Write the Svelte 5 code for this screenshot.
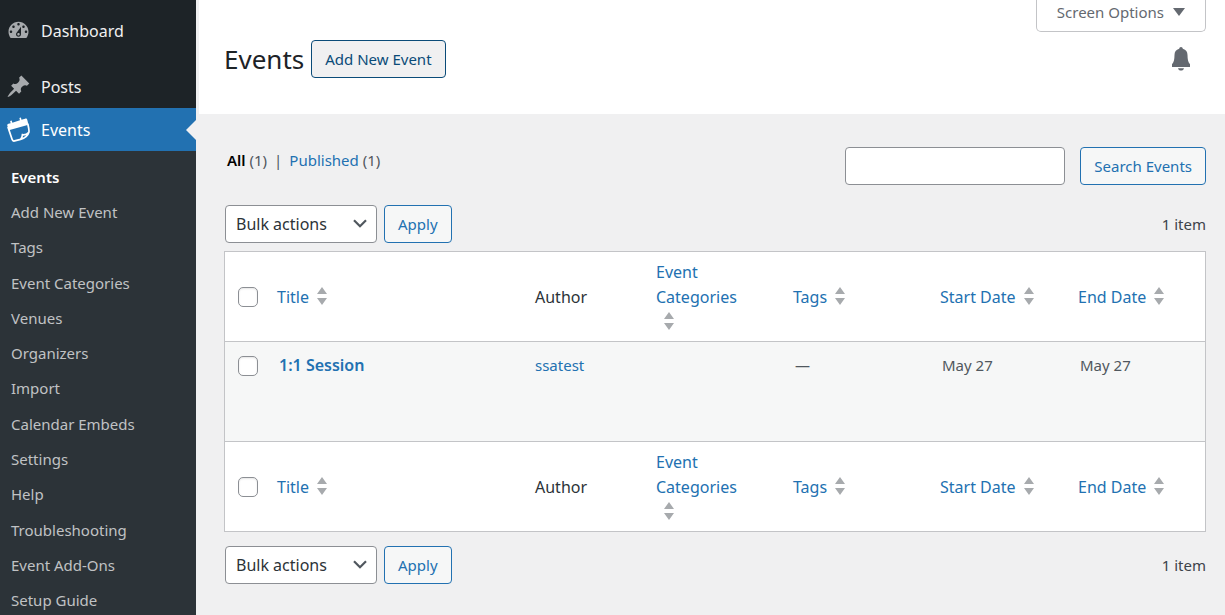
<script lang="ts">
  const submenu = [
    "Events",
    "Add New Event",
    "Tags",
    "Event Categories",
    "Venues",
    "Organizers",
    "Import",
    "Calendar Embeds",
    "Settings",
    "Help",
    "Troubleshooting",
    "Event Add-Ons",
    "Setup Guide",
  ];

  const columns = [
    { key: "title", label: "Title", sortable: true },
    { key: "author", label: "Author", sortable: false },
    { key: "categories", label: "Event Categories", sortable: true },
    { key: "tags", label: "Tags", sortable: true },
    { key: "start", label: "Start Date", sortable: true },
    { key: "end", label: "End Date", sortable: true },
  ];

  const events = [
    { id: 1, title: "1:1 Session", author: "ssatest", categories: "", tags: "—", start: "May 27", end: "May 27" },
  ];

  let search = $state("");
  let selected = $state<number[]>([]);
  let allSelected = $derived(selected.length === events.length);

  function toggleAll() {
    selected = allSelected ? [] : events.map((e) => e.id);
  }
</script>

{#snippet bulkNav(position: string)}
  <div class="tablenav {position}">
    <div class="bulk">
      <span class="select-wrap">
        <select aria-label="Select bulk action">
          <option>Bulk actions</option>
          <option>Edit</option>
          <option>Move to Trash</option>
        </select>
        <svg class="chevron" viewBox="0 0 14 9" aria-hidden="true">
          <path d="M1 1.2l6 6 6-6" fill="none" stroke="#50575e" stroke-width="2.2" />
        </svg>
      </span>
      <button class="button">Apply</button>
    </div>
    <span class="count">1 item</span>
  </div>
{/snippet}

{#snippet headings()}
  <tr>
    <td class="check">
      <input type="checkbox" aria-label="Select all" checked={allSelected} onchange={toggleAll} />
    </td>
    {#each columns as col (col.key)}
      <th scope="col">
        {#if col.sortable}
          <a href="#{col.key}">
            {col.label}<svg class="sorter" viewBox="0 0 10 18" aria-hidden="true">
              <path d="M0 7L5 0l5 7zM0 11h10l-5 7z" />
            </svg>
          </a>
        {:else}
          {col.label}
        {/if}
      </th>
    {/each}
  </tr>
{/snippet}

<div class="admin">
  <nav class="sidebar" aria-label="Main menu">
    <a class="item dashboard" href="#dashboard">
      <svg viewBox="0 0 20 20" aria-hidden="true">
        <path
          fill-rule="evenodd"
          d="M3.76 16h12.48c1.1-1.37 1.76-3.11 1.76-5 0-4.42-3.58-8-8-8s-8 3.58-8 8c0 1.89.66 3.63 1.76 5zM10 4c.55 0 1 .45 1 1s-.45 1-1 1-1-.45-1-1 .45-1 1-1zM6 6c.55 0 1 .45 1 1s-.45 1-1 1-1-.45-1-1 .45-1 1-1zm8 0c.55 0 1 .45 1 1s-.45 1-1 1-1-.45-1-1 .45-1 1-1zM12 7v6c0 1.1-.9 2-2 2s-2-.9-2-2c0-.57.24-1.08.63-1.45zM4 10c.55 0 1 .45 1 1s-.45 1-1 1-1-.45-1-1 .45-1 1-1zm12 0c.55 0 1 .45 1 1s-.45 1-1 1-1-.45-1-1 .45-1 1-1zm-5 3c0-.55-.45-1-1-1s-1 .45-1 1 .45 1 1 1 1-.45 1-1z"
        />
      </svg>
      Dashboard
    </a>
    <a class="item" href="#posts">
      <svg viewBox="0 0 20 20" aria-hidden="true">
        <path
          d="M10.44 3.02l1.82-1.82 6.36 6.35-1.83 1.82c-1.05-.68-2.48-.57-3.41.36l-.75.75c-.92.93-1.04 2.35-.35 3.41l-1.83 1.82-2.41-2.41-2.8 2.79c-.42.42-3.38 2.71-3.8 2.29s1.86-3.39 2.28-3.81l2.79-2.79L4.1 9.36l1.83-1.82c1.05.69 2.48.57 3.4-.36l.75-.75c.93-.92 1.05-2.35.36-3.41z"
        />
      </svg>
      Posts
    </a>
    <a class="item current" href="#events">
      <svg viewBox="0 -1 26 26" aria-hidden="true">
        <path
          d="M1.4 8.2c-.3-1.2.2-1.800 1.200-2.100l2.200-.7L4.300 3.200l1.600-.5.7 2.200 7.900-2.500L13.900.1l1.600-.5.6 2.200 3.700-1.100c1.200-.4 2 0 2.300 1.200l1.300 5.200L2.900 12.900z"
        />
        <path
          d="M2 9.500l4.300 12.700c.5 1.600 1.200 2.100 2.600 1.700l6.200-1.700c4-.9 7.400-3 8.700-7.300.5-2.400-.3-5-1.200-8.900M15.100 22.200c1.700-1.400 1.700-2.600 2-4.800 2.300.4 4.600-.4 6.700-2.500"
          fill="none"
          stroke="currentColor"
          stroke-width="1.8"
        />
      </svg>
      Events
    </a>
    <ul class="submenu">
      {#each submenu as label, i (label)}
        <li><a href="#sub-{i}" class:active={i === 0}>{label}</a></li>
      {/each}
    </ul>
  </nav>

  <div class="main">
    <header>
      <button class="screen-options">Screen Options <span class="caret"></span></button>
      <div class="heading">
        <h1>Events</h1>
        <a class="button add" href="#new">Add New Event</a>
        <button class="bell" aria-label="Notifications">
          <svg viewBox="0 0 18 24" aria-hidden="true">
            <path d="M9 0c1.100 0 1.600.8 1.800 1.800 3.300.8 4.600 3.200 4.700 6.200.1 4.500.5 7 2.500 9.200V20H0v-2.800C2 15 2.400 12.500 2.500 8c.1-3 1.400-5.400 4.700-6.200C7.400.8 7.900 0 9 0zM6 21.200h6c-.3 1.500-1.500 2.400-3 2.400s-2.700-.9-3-2.400z" />
          </svg>
        </button>
      </div>
    </header>

    <main>
      <div class="filters">
        <ul class="views">
          <li><a class="all" href="#all">All</a> (1)</li>
          <li>|</li>
          <li><a href="#published">Published</a> (1)</li>
        </ul>
        <form class="search" onsubmit={(e) => e.preventDefault()}>
          <input type="search" aria-label="Search Events" bind:value={search} />
          <button class="button">Search Events</button>
        </form>
      </div>

      {@render bulkNav("top")}

      <table>
        <colgroup>
          <col class="col-check" />
          {#each columns as col (col.key)}
            <col class="col-{col.key}" />
          {/each}
        </colgroup>
        <thead>{@render headings()}</thead>
        <tbody>
          {#each events as event (event.id)}
            <tr>
              <td class="check">
                <input type="checkbox" aria-label="Select {event.title}" value={event.id} bind:group={selected} />
              </td>
              <td class="title"><a href="#event-{event.id}">{event.title}</a></td>
              <td class="author"><a href="#author">{event.author}</a></td>
              <td>{event.categories}</td>
              <td>{event.tags}</td>
              <td>{event.start}</td>
              <td>{event.end}</td>
            </tr>
          {/each}
        </tbody>
        <tfoot>{@render headings()}</tfoot>
      </table>

      {@render bulkNav("bottom")}
    </main>
  </div>
</div>

<style>
  :global(body) {
    background: #f0f0f1;
  }
  .admin {
    display: flex;
    min-height: 100vh;
    background: #f0f0f1;
    color: #50575e;
    font-family: "Noto Sans", "Open Sans", sans-serif;
    font-size: 15px;
    line-height: 24px;
  }
  .admin * {
    box-sizing: border-box;
  }
  a {
    color: #2271b1;
    text-decoration: none;
  }
  ul {
    list-style: none;
    margin: 0;
    padding: 0;
  }
  button,
  input,
  select {
    font: inherit;
    margin: 0;
  }

  .sidebar {
    flex: 0 0 196px;
    background: #1d2327;
    padding-top: 9px;
  }
  .item {
    position: relative;
    display: flex;
    align-items: center;
    gap: 10px;
    height: 43px;
    padding-left: 6px;
    color: #f0f0f1;
    font-size: 16px;
  }
  .item svg {
    width: 25px;
    height: 25px;
    fill: #a7aaad;
  }
  .dashboard {
    margin-bottom: 13px;
  }
  .current {
    background: #2271b1;
    color: #fff;
  }
  .current svg {
    fill: #fff;
  }
  .current::after {
    content: "";
    position: absolute;
    right: 0;
    top: 12px;
    border: 10px solid transparent;
    border-left: 0;
    border-right-color: #f0f0f1;
  }
  .submenu {
    display: grid;
    grid-auto-rows: 1fr;
    align-items: center;
    min-height: 476px;
    padding: 8px 0 9px;
    background: #2c3338;
  }
  .submenu a {
    display: block;
    padding-left: 11px;
    color: #c0c2c4;
  }
  .submenu .active {
    color: #fff;
    font-weight: 600;
  }

  .main {
    flex: 1;
    min-width: 0;
  }
  header {
    display: flex;
    flex-direction: column;
    height: 114px;
    margin-left: 3px;
    padding: 0 19px 0 25px;
    background: #fff;
  }
  .screen-options {
    display: flex;
    align-items: center;
    align-self: flex-end;
    gap: 9px;
    height: 32px;
    padding: 0 20px 7px;
    border: 1px solid #c3c4c7;
    border-top: 0;
    border-radius: 0 0 5px 5px;
    background: #fff;
    color: #646970;
  }
  .caret {
    border: 6px solid transparent;
    border-top: 8px solid #646970;
    border-bottom: 0;
  }
  .heading {
    display: flex;
    align-items: center;
    gap: 7px;
    padding-top: 8px;
  }
  h1 {
    margin: 0;
    color: #1d2327;
    font-size: 26px;
    font-weight: 400;
    line-height: 36px;
  }
  .button {
    display: inline-flex;
    align-items: center;
    justify-content: center;
    height: 38px;
    padding: 0 13px;
    border: 1px solid #2271b1;
    border-radius: 4px;
    background: #f6f7f7;
    color: #2271b1;
    white-space: nowrap;
  }
  .add {
    border-color: #0a4b78;
    background: #f0f0f1;
    color: #0a4b78;
  }
  .bell {
    display: flex;
    margin-left: auto;
    padding: 0 16px;
    border: 0;
    background: none;
  }
  .bell svg {
    width: 18px;
    height: 24px;
    fill: #646970;
  }

  main {
    padding: 33px 19px 0 28px;
  }
  .filters {
    display: flex;
    justify-content: space-between;
  }
  .views {
    display: flex;
    gap: 7px;
    padding: 1px 0 0 3px;
  }
  .all {
    color: #000;
    font-weight: 600;
  }
  .search {
    display: flex;
    gap: 15px;
  }
  .search input {
    width: 220px;
    height: 38px;
    padding: 0 10px;
    border: 1px solid #8c8f94;
    border-radius: 4px;
    background: #fff;
  }
  .tablenav {
    display: flex;
    align-items: center;
    justify-content: space-between;
  }
  .top {
    padding: 20px 0 8px;
  }
  .bottom {
    padding: 14px 0;
  }
  .bulk {
    display: flex;
    gap: 7px;
    padding-left: 1px;
  }
  .select-wrap {
    position: relative;
  }
  .bulk select {
    width: 152px;
    height: 38px;
    padding: 0 28px 0 10px;
    border: 1px solid #8c8f94;
    border-radius: 4px;
    appearance: none;
    background: #fff;
    color: #2c3338;
    font-size: 16px;
  }
  .chevron {
    position: absolute;
    top: 14px;
    right: 10px;
    width: 14px;
    height: 9px;
    pointer-events: none;
  }
  .count {
    color: #3c434a;
  }

  table {
    width: 100%;
    table-layout: fixed;
    border: 1px solid #c3c4c7;
    border-spacing: 0;
    background: #fff;
  }
  .col-check {
    width: 42px;
  }
  .col-author {
    width: 121px;
  }
  .col-categories,
  .col-end {
    width: 137px;
  }
  .col-tags {
    width: 147px;
  }
  .col-start {
    width: 138px;
  }
  th,
  td {
    padding: 11px 12px;
    text-align: left;
    vertical-align: top;
  }
  th {
    padding: 8px 10px 6px;
    color: #2c3338;
    font-size: 16px;
    font-weight: 400;
    line-height: 25px;
    vertical-align: middle;
  }
  thead tr,
  tfoot tr {
    height: 90px;
  }
  thead td,
  tfoot td {
    vertical-align: middle;
  }
  thead td,
  thead th {
    border-bottom: 1px solid #c3c4c7;
  }
  tfoot td,
  tfoot th {
    border-top: 1px solid #c3c4c7;
  }
  tbody tr {
    height: 99px;
    background: #f6f7f7;
  }
  .check {
    padding: 14px 0 0 13px;
  }
  thead .check,
  tfoot .check {
    padding-top: 0;
  }
  .check input {
    display: block;
    width: 20px;
    height: 20px;
    border: 1px solid #8c8f94;
    border-radius: 5px;
    appearance: none;
    background: #fff;
    box-shadow: inset 0 1px 2px rgba(0, 0, 0, 0.1);
  }
  .check input:checked {
    background: #2271b1;
  }
  .title a {
    font-size: 16px;
    font-weight: 600;
  }
  .author {
    padding-left: 10px;
  }
  .sorter {
    width: 10px;
    height: 18px;
    margin: 0 20px 0 8px;
    vertical-align: -2px;
    fill: #a7aaad;
  }
</style>
